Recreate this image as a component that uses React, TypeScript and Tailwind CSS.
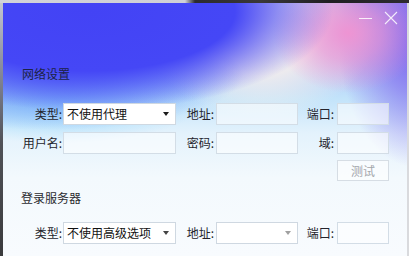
import React from 'react';

const font = "font-['Noto_Sans_CJK_SC','Noto_Sans',sans-serif]";

const Label: React.FC<{ text: string; w: string }> = ({ text, w }) => (
  <span className={`${w} shrink-0 text-right text-[12px] leading-[16px] text-[#24242c]`}>{text}</span>
);

const Input: React.FC<{ w: string }> = ({ w }) => (
  <div className={`${w} h-[22px] shrink-0 border border-[#d3dde6] bg-white/55`} />
);

const Select: React.FC<{ w: string; value?: string; arrow?: string }> = ({ w, value, arrow = 'border-t-[#1a1a1a]' }) => (
  <div className={`${w} h-[22px] shrink-0 flex items-center justify-between border border-[#cfd8e1] bg-white pl-[3px] pr-[6px]`}>
    <span className="text-[12px] leading-[16px] text-[#111]">{value}</span>
    <span className={`w-0 h-0 border-l-[3.5px] border-r-[3.5px] border-t-[4px] border-l-transparent border-r-transparent ${arrow}`} />
  </div>
);

const App: React.FC = () => {
  return (
    <div className={`w-[409px] h-[256px] overflow-hidden flex flex-col ${font}`}>
      {/* screen frame above the window */}
      <div className="h-[3px] shrink-0 bg-[linear-gradient(to_right,#d2d3d8_0px,#cfd0d6_185px,#2c2b30_195px,#3a3838_260px,#1f1e22_330px,#2e2c30_409px)]" />
      <div className="flex flex-1 min-h-0">
        <div className="w-[3px] shrink-0 bg-[linear-gradient(to_bottom,#c4c6d0_0px,#8c8fa0_60px,#505258_140px,#3a3a3c_256px)]" />
        <div className="flex-1 flex flex-col bg-[image:radial-gradient(245px_100px_at_85px_8px,#4343f5_0%,#4547f6_60%,rgba(75,85,246,0)_100%),radial-gradient(190px_55px_at_50px_72px,#6d8cf7_0%,rgba(109,140,247,0)_100%),radial-gradient(75px_60px_at_345px_30px,#ee94d3_0%,rgba(238,148,211,0.65)_45%,rgba(238,148,211,0)_100%),radial-gradient(80px_130px_at_415px_35px,#7a62ee_0%,rgba(122,98,238,0.6)_45%,rgba(122,98,238,0)_100%),radial-gradient(115px_85px_at_258px_30px,#faf2ec_0%,rgba(250,242,236,0.8)_50%,rgba(250,242,236,0)_100%),radial-gradient(150px_45px_at_55px_95px,#8ed4fb_0%,rgba(142,212,251,0)_100%),linear-gradient(to_bottom,#8d98f4_0px,#afbff6_55px,#c2e3fa_95px,#e3f2fc_130px,#f3f9fd_175px,#f8fbfe_253px)]">
          {/* title bar */}
          <div className="h-[28px] shrink-0 flex items-start justify-end pt-[8px] pr-[9px] gap-[12px]">
            <div className="mt-[7px] w-[13px] h-[1px] bg-white/85" />
            <svg width="14" height="14" viewBox="0 0 14 14" className="text-white/85">
              <path d="M1 1L13 13M13 1L1 13" stroke="currentColor" strokeWidth="1.1" />
            </svg>
          </div>

          <div className="pl-[19px] mt-[35px] text-[12px] leading-[16px] text-[#1c2246]">网络设置</div>

          <div className="flex flex-col mt-[21px]">
            <div className="flex items-center h-[22px]">
              <Label text="类型:" w="w-[59px]" />
              <div className="w-[1px]" />
              <Select w="w-[113px]" value="不使用代理" />
              <Label text="地址:" w="w-[38px]" />
              <div className="w-[2px]" />
              <Input w="w-[82px]" />
              <Label text="端口:" w="w-[36px]" />
              <div className="w-[3px]" />
              <Input w="w-[52px]" />
            </div>
            <div className="flex items-center h-[22px] mt-[7px]">
              <Label text="用户名:" w="w-[59px]" />
              <div className="w-[1px]" />
              <Input w="w-[113px]" />
              <Label text="密码:" w="w-[38px]" />
              <div className="w-[2px]" />
              <Input w="w-[82px]" />
              <Label text="域:" w="w-[36px]" />
              <div className="w-[3px]" />
              <Input w="w-[52px]" />
            </div>
            <div className="flex h-[21px] mt-[6px] pl-[334px]">
              <button className="w-[52px] h-[21px] border border-[#d6dde4] bg-white/60 text-[12px] leading-[16px] text-[#a3a6ab]">
                测试
              </button>
            </div>
          </div>

          <div className="pl-[18px] mt-[9px] text-[12px] leading-[16px] text-[#2b2b30]">登录服务器</div>

          <div className="flex items-center h-[23px] mt-[15px]">
            <Label text="类型:" w="w-[59px]" />
            <div className="w-[1px]" />
            <Select w="w-[113px]" value="不使用高级选项" arrow="border-t-[#444]" />
            <Label text="地址:" w="w-[38px]" />
            <div className="w-[2px]" />
            <Select w="w-[82px]" arrow="border-t-[#a0a0a0]" />
            <Label text="端口:" w="w-[36px]" />
            <div className="w-[3px]" />
            <Input w="w-[52px]" />
          </div>
        </div>
        <div className="w-[2px] shrink-0 bg-[#d9dadd]" />
      </div>
    </div>
  );
};

export default App;
